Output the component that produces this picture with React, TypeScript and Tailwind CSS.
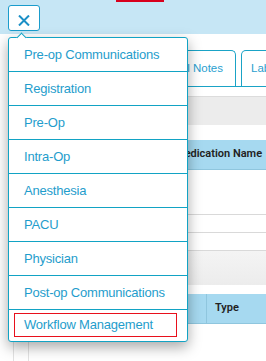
import React from "react";

const items = [
  "Pre-op Communications",
  "Registration",
  "Pre-Op",
  "Intra-Op",
  "Anesthesia",
  "PACU",
  "Physician",
  "Post-op Communications",
];

export default function App() {
  return (
    <div className="relative w-[266px] h-[361px] overflow-hidden bg-white font-['Liberation_Sans',Arial,sans-serif]">
      {/* top bar */}
      <div className="h-[34px] bg-[#c6e6f5] flex items-start">
        <div className="ml-[8px] mt-[5px] w-[32px] h-[26px] border border-[#1a9ccc] rounded-[3px] bg-white flex justify-center pt-[9px]">
          <svg width="12" height="11" viewBox="0 0 12 11" fill="none">
            <path d="M1 0.5 L11 10.5 M11 0.5 L1 10.5" stroke="#1b8fc6" strokeWidth="2" />
          </svg>
        </div>
        <div className="ml-[76px] w-[48px] h-[2px] bg-[#d8001c]" />
      </div>

      {/* tabs */}
      <div className="mt-[16px] h-[36px] flex gap-[5px] pl-[13px] text-[11.5px] text-[#2aa0cf] whitespace-nowrap">
        <div className="w-[108px] shrink-0 border border-b-0 border-[#1aa3c6] rounded-t-[5px] flex items-center px-[10px]">
          Medications
        </div>
        <div className="w-[110px] shrink-0 border border-b-0 border-[#1aa3c6] rounded-t-[5px] flex items-center justify-end pr-[12px]">
          Clinical Notes
        </div>
        <div className="w-[90px] shrink-0 border border-b-0 border-[#1aa3c6] rounded-t-[5px] flex items-center pl-[9px]">
          Lab Results
        </div>
      </div>

      {/* tab panel */}
      <div className="border-t border-[#1aa3c6] ml-[13px] border-l border-l-[#e2e2e2] h-[300px]">
        <div className="mt-[9px] h-[29px] bg-[#ececec] border-t border-[#dcdcdc]" />
        <div className="mt-[15px] h-[30px] bg-[#a6d9f0] border-b border-[#8fc6de] flex items-center pl-[161px] text-[11px] font-semibold font-['Roboto',Arial,sans-serif] text-[#222] whitespace-nowrap">
          Medication Name
        </div>
        <div className="h-[45px] border-b border-[#d9d9d9]" />
        <div className="h-[18px] border-b border-[#d9d9d9]" />
        <div className="h-[18px] border-b border-[#d9d9d9]" />
        <div className="h-[34px] bg-gradient-to-b from-[#f4f4f4] to-[#ececec]" />
        <div className="ml-[14px] border-l border-[#e2e2e2] h-[100px]">
          <div className="h-[9px]" />
          <div className="h-[30px] bg-[#a6d9f0] border-b border-[#8fc6de] flex text-[11px] font-semibold font-['Roboto',Arial,sans-serif] text-[#222]">
            <div className="w-[178px] border-r border-[#8fc6de]" />
            <div className="flex items-center pl-[8px]">Type</div>
          </div>
        </div>
      </div>

      {/* caret */}
      <div className="absolute left-[18px] top-[34px] w-[7px] h-[7px] bg-white border-l border-t border-[#12a3c4] rotate-45 z-20" />

      {/* dropdown menu */}
      <div className="absolute left-[8px] top-[37px] w-[180px] bg-white border border-[#12a3c4] rounded-[3px] shadow-[0_5px_14px_rgba(0,0,0,0.35)] z-10 text-[13px] tracking-[-0.2px] text-[#1f9dcc]">
        {items.map((t) => (
          <div key={t} className="h-[34px] border-b border-[#12a3c4] flex items-center pl-[15px] whitespace-nowrap">
            {t}
          </div>
        ))}
        <div className="h-[31px] pt-[3px] pl-[5px]">
          <div className="w-[163px] h-[24px] border border-[#e8101c] flex items-center pl-[9px] whitespace-nowrap">
            Workflow Management
          </div>
        </div>
      </div>
    </div>
  );
}
